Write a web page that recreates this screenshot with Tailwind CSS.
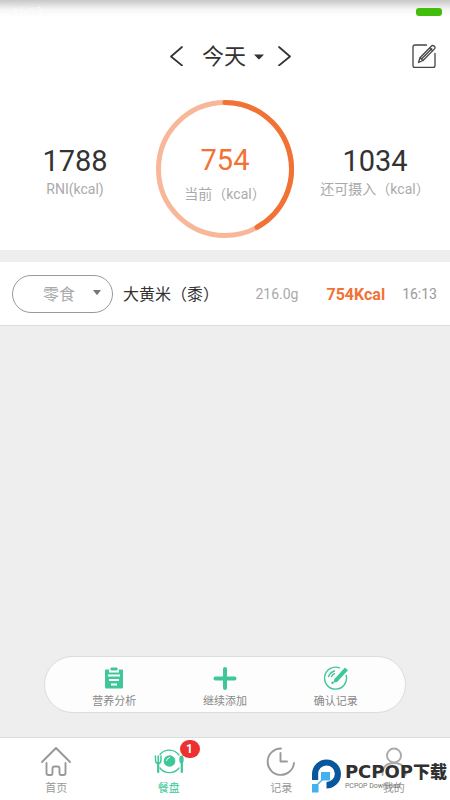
<!DOCTYPE html>
<html lang="zh-CN">
<head>
<meta charset="utf-8">
<meta name="viewport" content="width=device-width, initial-scale=1">
<title>餐盘</title>
<script src="https://cdn.jsdelivr.net/npm/@tailwindcss/browser@4"></script>
</head>
<body class="relative flex min-h-screen flex-col bg-[#eeeeee] font-[Roboto,'Noto_Sans_CJK_SC',sans-serif] text-[#333333]">
  <header class="bg-white pb-3">
    <div class="flex h-6 items-center justify-between bg-linear-to-b from-[#c8c8c8] via-[#f6f6f6] via-40% to-white to-70% px-2 text-xs text-white/50">
      <span class="pl-1">16:13</span>
      <span class="h-2 w-[26px] rounded-[3px] bg-[#43bd0b]"></span>
    </div>
    <div class="grid h-16 grid-cols-[1fr_auto_1fr] items-center px-3">
      <span></span>
      <div class="flex items-center gap-[14px] pl-4">
        <button aria-label="前一天" class="w-5">
          <svg class="h-5 w-5" viewBox="0 0 20 20" fill="none" stroke="#333" stroke-width="1.700" stroke-linecap="round" stroke-linejoin="round"><path d="M14 1 3 10.500 14 19.500"/></svg>
        </button>
        <button class="flex items-center gap-2 pt-[2px] text-[22px] leading-8">今天
          <svg class="h-2 w-[10px]" viewBox="0 0 10 8"><path d="M0 1.500h10L5.700 6q-.7.600-1.400 0z" fill="#333"/></svg>
        </button>
        <button aria-label="后一天" class="w-5">
          <svg class="h-5 w-5" viewBox="0 0 20 20" fill="none" stroke="#333" stroke-width="1.700" stroke-linecap="round" stroke-linejoin="round"><path d="M1 1 12 10.500 1 19.500"/></svg>
        </button>
      </div>
      <button aria-label="编辑" class="justify-self-end pr-[2px]">
        <svg class="h-6 w-6" viewBox="0 0 24 24" fill="none" stroke="#444" stroke-width="1.300" stroke-linecap="round" stroke-linejoin="round"><path d="M14.500 1H3Q1 1 1 3V21.500Q1 23.500 3 23.500H21Q23 23.500 23 21.500V9.500"/><path d="M6.500 18.500 8 13.800 19.300 2.200Q20.600.8 22.200 2.100 23.700 3.500 22.500 4.900L11 16.500ZM8 13.800 11 16.500M17.500 4 20.700 6.800M9.500 15 19.700 4.800"/></svg>
      </button>
    </div>
    <div class="grid grid-cols-3 items-center pt-3 text-center">
      <div class="pt-2">
        <p class="text-[29px] leading-8">1788</p>
        <p class="text-sm leading-6 text-[#aaaaaa]">RNI(kcal)</p>
      </div>
      <div class="relative mx-auto grid h-[138px] w-[138px] place-items-center">
        <svg class="absolute inset-0" viewBox="0 0 138 138" fill="none" stroke-width="5" stroke-linecap="round"><circle cx="69" cy="69" r="66.500" stroke="#f8b799"/><path d="M69 2.500A66.500 66.500 0 0 1 101 127.300" stroke="#f27236"/></svg>
        <div class="relative pt-[14px]">
          <p class="text-[29px] leading-9 text-[#f27236]">754</p>
          <p class="text-sm leading-8 whitespace-nowrap text-[#aaaaaa]">当前（kcal）</p>
        </div>
      </div>
      <div class="pt-2">
        <p class="text-[29px] leading-8">1034</p>
        <p class="text-sm leading-6 whitespace-nowrap text-[#aaaaaa]">还可摄入（kcal）</p>
      </div>
    </div>
  </header>

  <main class="flex flex-1 flex-col pt-3">
    <div class="flex h-16 items-center border-b border-[#dcdcdc] bg-white px-3 whitespace-nowrap">
      <div class="relative">
        <select aria-label="餐次" class="h-[38px] w-[101px] appearance-none rounded-full border border-[#999999] bg-white pt-[2px] pl-[30px] text-base text-[#aaaaaa]"><option>零食</option></select>
        <svg class="pointer-events-none absolute top-[14px] right-3 h-2 w-2" viewBox="0 0 8 8"><path d="M0 1h8L4.600 5.500q-.6.600-1.200 0z" fill="#777"/></svg>
      </div>
      <span class="pt-[2px] pl-[10px] text-base">大黄米（黍）</span>
      <span class="ml-auto text-sm text-[#aaaaaa]">216.0g</span>
      <span class="ml-7 pt-[2px] text-base font-bold text-[#f27236]">754Kcal</span>
      <span class="mr-px ml-[17px] text-sm text-[#999999]">16:13</span>
    </div>
    <div class="mx-11 mt-auto mb-6 grid h-[57px] grid-cols-3 rounded-full border border-[#dcdcdc] bg-[#fdfdfd] px-[14px] text-[11px] leading-4 text-[#888888]">
      <button class="flex flex-col items-center gap-1 pt-[9px]">
        <svg class="h-6 w-6" viewBox="0 0 24 24"><path d="M4 3.500h4L9 1.500h6l1 2h4q1 0 1 1V21q0 1.500-1.500 1.500h-15Q3 22.500 3 21V4.500q0-1 1-1z" fill="#3ec798"/><path d="M8 3.500v2h8v-2M6 9.500h12M7 14h10M9 18.500h6" stroke="white" stroke-width="1.900" fill="none"/></svg>
        营养分析
      </button>
      <button class="flex flex-col items-center gap-1 pt-[9px]">
        <svg class="h-6 w-6" viewBox="0 0 24 24" stroke="#3ec798" stroke-width="4" stroke-linecap="round"><path d="M12 3v19M2.500 12.500h19"/></svg>
        继续添加
      </button>
      <button class="flex flex-col items-center gap-1 pt-[9px]">
        <svg class="h-6 w-6" viewBox="0 0 24 24" fill="none" stroke="#3ec798" stroke-width="1.400" stroke-linecap="round" stroke-linejoin="round"><path d="M15.500 1.900A11 11 0 1 0 22.200 9.500"/><path d="M4.500 10.500Q6.500 6 10.500 5M7.500 10.500Q8.500 8.500 10.500 7.700"/><path d="M11 13.500 21 2.500 23 4.300 12.800 15.300 10.300 15.700ZM12 14.300 22 3.400"/><circle cx="8.500" cy="16.800" r=".6" fill="#3ec798"/></svg>
        确认记录
      </button>
    </div>
  </main>

  <nav class="grid h-[63px] grid-cols-4 border-t border-[#dddddd] bg-white text-[11px] leading-4 text-[#999999]">
    <a href="#" class="flex flex-col items-center gap-[3px] pt-2">
      <svg class="h-8 w-8" viewBox="0 0 32 32" fill="none" stroke="#999" stroke-width="1.900" stroke-linecap="round" stroke-linejoin="round"><path d="M2 16 16 2 30 16M6.500 17V27Q6.500 29 8.500 29H11Q12.500 29 12.500 27V22.500Q12.500 20.500 14.500 20.500H17.500Q19.500 20.500 19.500 22.500V27Q19.500 29 21 29H23.500Q25.500 29 25.500 27V17"/></svg>
      首页
    </a>
    <a href="#" class="relative flex flex-col items-center gap-[3px] pt-2 text-[#3ec798]">
      <svg class="h-8 w-8" viewBox="0 0 32 32" fill="none" stroke="#3ec798" stroke-linecap="round"><path d="M7 8.500A12 12 0 0 1 26 9M7 22A12 12 0 0 0 26 22" stroke-width="1.300"/><circle cx="16.500" cy="15" r="5.800" fill="#3ec798" stroke="none"/><path d="M13.500 14.500Q14 12 16.500 11.500" stroke="white"/><path d="M2.500 10V14Q2.500 17.500 5.200 17.500T8 14V10M5.200 10V16" stroke-width="1.500"/><path d="M5.200 17V26" stroke-width="2.200"/><ellipse cx="28.500" cy="13.500" rx="2.200" ry="4" fill="#3ec798" stroke="none"/><path d="M28.800 16V26" stroke-width="2.200"/></svg>
      餐盘
      <span class="absolute top-[2px] left-[67px] h-[18px] w-5 rounded-full bg-[#ed3030] text-center text-xs leading-[18px] font-bold text-white">1</span>
    </a>
    <a href="#" class="flex flex-col items-center gap-[3px] pt-2">
      <svg class="h-8 w-8" viewBox="0 0 32 32" fill="none" stroke="#999" stroke-width="1.900" stroke-linecap="round" stroke-linejoin="round"><path d="M16 2.500A13.200 13.200 0 1 0 29 17M15.500 7V15.500H22"/></svg>
      记录
    </a>
    <a href="#" class="flex flex-col items-center gap-[3px] pt-2">
      <svg class="h-8 w-8" viewBox="0 0 32 32" fill="none" stroke="#aaa" stroke-width="1.900" stroke-linecap="round"><circle cx="16" cy="9.500" r="7"/><path d="M4.500 29Q4.500 17 16 17T27.500 29"/></svg>
      我的
    </a>
  </nav>

  <div class="pointer-events-none absolute right-[3px] bottom-[7px] flex items-center gap-1 whitespace-nowrap">
    <svg class="h-[34px] w-[29px]" viewBox="0 0 29 34"><path d="M0 21V15A14.500 14.500 0 1 1 14.500 29.500V23A8.300 8.300 0 1 0 6.200 15V21Z" fill="#07569e"/><path d="M9 13H18V21.500H10.500L6.500 25.500V33.500H0V25H5L9 21Z" fill="#43b0ef"/></svg>
    <div>
      <p class="font-['DejaVu_Sans','Noto_Sans_CJK_SC',sans-serif] text-[18px] leading-5 font-black text-[#303030]">PCPOP<span class="text-[17px]">下载</span></p>
      <p class="text-[7px] leading-2 text-[#777777]">PCPOP Download</p>
    </div>
  </div>
</body>
</html>
